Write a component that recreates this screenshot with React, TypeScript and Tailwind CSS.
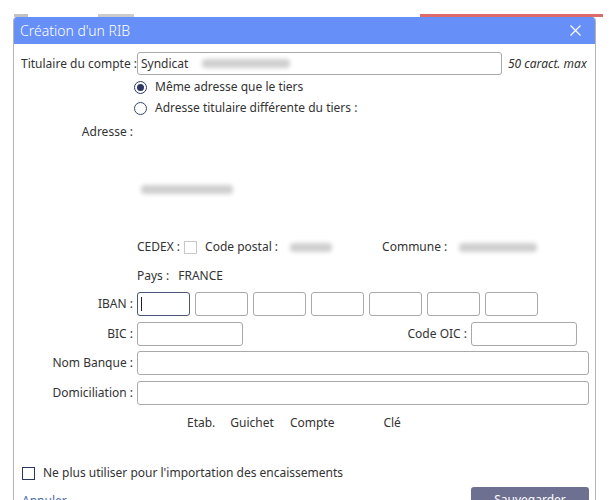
import React from "react";

const font = { fontFamily: '"Noto Sans", "Open Sans", sans-serif' };

function Box({ className = "" }: { className?: string }) {
  return <div className={`h-[24px] rounded-[3px] border border-[#a9a9a9] bg-white ${className}`} />;
}

function Blur({ w }: { w: number }) {
  return <div className="h-[9px] rounded-sm bg-[#cfcfcf] blur-[2px]" style={{ width: w }} />;
}

export default function App() {
  return (
    <div className="h-[500px] w-[613px] overflow-hidden bg-white text-[12px] text-[#333]" style={font}>
      {/* background peeking */}
      <div className="flex h-[17px] items-end overflow-hidden pl-[14px]">
        <div className="flex h-[3px] w-full items-start overflow-hidden">
          <div className="h-[6px] w-[14px] bg-[#9a9a9a] opacity-60" />
          <div className="ml-[70px] h-[6px] w-[36px] bg-[#9a9a9a] opacity-50" />
          <div className="ml-auto mr-[10px] h-[6px] w-[183px] bg-[#d23a3a] opacity-75" />
        </div>
      </div>
      <div className="mr-[17px] ml-[13px] flex h-[483px] flex-col overflow-hidden rounded-t-[4px] border-x border-[#b5b5b5]">
        <div className="flex h-[27px] shrink-0 items-center justify-between bg-[#6690f8] pl-[6px] pr-[14px] text-white">
          <span className="text-[14px] font-light">Création d'un RIB</span>
          <svg width="11" height="11" viewBox="0 0 11 11" stroke="white" strokeWidth="1.2">
            <path d="M0.5 0.5 L10.5 10.5 M10.5 0.5 L0.5 10.5" />
          </svg>
        </div>
        <div className="flex flex-1 flex-col bg-white">
          {/* Titulaire */}
          <div className="mt-[8px] flex h-[23px] items-center">
            <span className="w-[123px] pl-[7px] whitespace-nowrap">Titulaire du compte :</span>
            <div className="flex h-[23px] w-[365px] items-center rounded-[3px] border border-[#a9a9a9] pl-[3px]">
              <span>Syndicat</span>
              <div className="ml-[14px]"><Blur w={88} /></div>
            </div>
            <span className="ml-[6px] italic whitespace-nowrap">50 caract. max</span>
          </div>
          {/* radios */}
          <div className="mt-[4px] flex h-[16px] items-center pl-[120px]">
            <div className="flex h-[13px] w-[13px] items-center justify-center rounded-full border border-[#2c3862]">
              <div className="h-[7px] w-[7px] rounded-full bg-[#2c3862]" />
            </div>
            <span className="ml-[8px]">Même adresse que le tiers</span>
          </div>
          <div className="mt-[5px] flex h-[16px] items-center pl-[120px]">
            <div className="h-[13px] w-[13px] rounded-full border border-[#3a4670]" />
            <span className="ml-[8px]">Adresse titulaire différente du tiers :</span>
          </div>
          <div className="mt-[8px] flex h-[16px] items-center">
            <span className="w-[119px] text-right">Adresse :</span>
          </div>
          <div className="mt-[41px] flex h-[16px] items-center pl-[127px]">
            <Blur w={92} />
          </div>
          {/* CEDEX */}
          <div className="mt-[42px] flex h-[16px] items-center pl-[123px]">
            <span>CEDEX :</span>
            <div className="ml-[4px] h-[13px] w-[13px] border border-[#c9c9c9]" />
            <span className="ml-[8px]">Code postal :</span>
            <div className="ml-[12px]"><Blur w={42} /></div>
            <span className="ml-[50px]">Commune :</span>
            <div className="ml-[12px]"><Blur w={78} /></div>
          </div>
          <div className="mt-[13px] flex h-[16px] items-center pl-[123px]">
            <span>Pays :</span>
            <span className="ml-[9px]">FRANCE</span>
          </div>
          {/* IBAN */}
          <div className="mt-[8px] flex h-[24px] items-center">
            <span className="w-[123px] pr-[4px] text-right">IBAN :</span>
            <div className="flex gap-[5px]">
              <div className="flex h-[24px] w-[53px] items-center rounded-[3px] border border-[#4a5578] pl-[3px]">
                <div className="h-[14px] w-px bg-[#222]" />
              </div>
              <Box className="w-[53px]" />
              <Box className="w-[53px]" />
              <Box className="w-[53px]" />
              <Box className="w-[53px]" />
              <Box className="w-[53px]" />
              <Box className="w-[53px]" />
            </div>
          </div>
          {/* BIC */}
          <div className="mt-[6px] flex h-[24px] items-center">
            <span className="w-[123px] pr-[4px] text-right">BIC :</span>
            <Box className="w-[106px]" />
            <span className="ml-auto mr-[4px]">Code OIC :</span>
            <Box className="mr-[18px] w-[106px]" />
          </div>
          <div className="mt-[5px] flex h-[24px] items-center">
            <span className="w-[123px] pr-[4px] text-right">Nom Banque :</span>
            <Box className="mr-[6px] flex-1" />
          </div>
          <div className="mt-[6px] flex h-[24px] items-center">
            <span className="w-[123px] pr-[4px] text-right">Domiciliation :</span>
            <Box className="mr-[6px] flex-1" />
          </div>
          <div className="mt-[10px] flex h-[16px] items-center pl-[173px]">
            <span>Etab.</span>
            <span className="ml-[15px]">Guichet</span>
            <span className="ml-[16px]">Compte</span>
            <span className="ml-[49px]">Clé</span>
          </div>
          <div className="mt-[34px] flex h-[16px] items-center pl-[8px]">
            <div className="h-[13px] w-[13px] border-[1.5px] border-[#2c3862]" />
            <span className="ml-[8px]">Ne plus utiliser pour l'importation des encaissements</span>
          </div>
          <div className="mt-[6px] flex items-start justify-between pl-[8px] pr-[6px]">
            <span className="mt-[5px] text-[#4b6ea6]">Annuler</span>
            <div className="flex h-[26px] w-[118px] items-center justify-center rounded-t-[3px] bg-[#6e7092] text-white">
              Sauvegarder
            </div>
          </div>
        </div>
      </div>
    </div>
  );
}
